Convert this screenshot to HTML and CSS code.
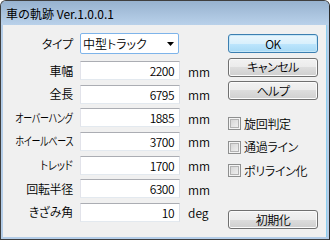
FILE: index.html
```html
<!DOCTYPE html>
<html lang="ja">
<head>
<meta charset="utf-8">
<title>車の軌跡</title>
<link rel="stylesheet" href="styles.css">
</head>
<body>
<div class="window">
  <div class="titlebar"><span class="title">車の軌跡 Ver.1.0.0.1</span></div>
  <div class="client">
    <div class="form">
      <div class="row-type">
        <span class="label">タイプ</span>
        <div class="combo">
          <span class="combo-text">中型トラック</span>
          <svg class="combo-arrow" width="7" height="4" viewBox="0 0 7 4"><polygon points="0,0 7,0 3.5,4" fill="#000"/></svg>
        </div>
      </div>
      <div class="fields">
        <span class="label">車幅</span><span class="field">2200</span><span class="unit">mm</span>
        <span class="label">全長</span><span class="field">6795</span><span class="unit">mm</span>
        <span class="label label-narrow">オーバーハング</span><span class="field">1885</span><span class="unit">mm</span>
        <span class="label label-narrow">ホイールベース</span><span class="field">3700</span><span class="unit">mm</span>
        <span class="label label-tight">トレッド</span><span class="field">1700</span><span class="unit">mm</span>
        <span class="label">回転半径</span><span class="field">6300</span><span class="unit">mm</span>
        <span class="label">きざみ角</span><span class="field">10</span><span class="unit">deg</span>
      </div>
    </div>
    <div class="side">
      <div class="btn btn-default">OK</div>
      <div class="btn">キャンセル</div>
      <div class="btn">ヘルプ</div>
      <div class="checks">
        <div class="check"><span class="box"></span><span>旋回判定</span></div>
        <div class="check"><span class="box"></span><span>通過ライン</span></div>
        <div class="check"><span class="box"></span><span>ポリライン化</span></div>
      </div>
      <div class="btn btn-init">初期化</div>
    </div>
  </div>
</div>
</body>
</html>
```

FILE: styles.css
```css
* { box-sizing: border-box; }
html, body { margin: 0; background: #fff; }
body {
  width: 330px;
  height: 240px;
  overflow: hidden;
  font-family: "Noto Sans CJK JP", "Liberation Sans", sans-serif;
  font-size: 12px;
  font-weight: 350;
  color: #000;
  font-feature-settings: "palt";
}
.window {
  width: 330px;
  height: 240px;
  border: 1px solid #3f3f3f;
  border-right-color: #2b2b2b;
  border-radius: 6px 6px 0 0;
  background: #b4cde8;
  display: flex;
  flex-direction: column;
}
.titlebar {
  height: 24px;
  background: linear-gradient(#97b2cf, #b9d1ea);
  border-radius: 5px 5px 0 0;
  display: flex;
  align-items: center;
  padding-left: 5px;
}
.title {
  font-size: 12px;
  font-weight: 400;
  line-height: 14px;
  padding-top: 1px;
  font-feature-settings: normal;
}
.client {
  flex: 1;
  margin: 0 2px 2px;
  background: #f0f0f0;
  display: flex;
  padding: 8px 0 8px 0;
  border-right: 1px solid #8fd0ef;
}
.form { width: 225px; }
.row-type {
  display: grid;
  grid-template-columns: 70px 100px;
  column-gap: 7px;
  height: 21px;
  align-items: center;
}
.label {
  justify-self: end;
  white-space: nowrap;
  line-height: 14px;
  letter-spacing: -0.3px;
}
.label-narrow {
  transform: scaleX(0.75);
  transform-origin: right center;
}
.label-tight {
  transform: scaleX(0.86);
  transform-origin: right center;
}
.combo {
  height: 21px;
  width: 99px;
  border: 1px solid #7eb4ea;
  border-radius: 2px;
  background: #fff;
  display: flex;
  align-items: center;
  justify-content: space-between;
  padding: 0 4px 0 2px;
}
.combo-text { line-height: 14px; }
.combo-arrow { display: block; }
.fields {
  display: grid;
  grid-template-columns: 70px 100px auto;
  column-gap: 7px;
  grid-auto-rows: 19px;
  row-gap: 4.67px;
  margin-top: 7px;
  align-items: center;
}
.field {
  height: 19px;
  background: #fff;
  border: 1px solid;
  border-color: #abadb3 #dbdfe6 #e3e9ef #e2e3ea;
  text-align: right;
  padding-right: 5px;
  line-height: 17px;
  letter-spacing: -0.5px;
}
.unit {
  margin-left: 1px;
  line-height: 14px;
  padding-top: 2px;
}
.side {
  width: 90px;
  display: flex;
  flex-direction: column;
  padding-top: 1px;
}
.btn {
  height: 19px;
  margin-bottom: 4.5px;
  border: 1px solid #707070;
  border-radius: 3px;
  background: linear-gradient(#f2f2f2 0%, #ebebeb 50%, #dddddd 50%, #cfcfcf 100%);
  box-shadow: inset 0 0 0 1px #fbfbfb;
  display: flex;
  align-items: center;
  justify-content: center;
  line-height: 14px;
  letter-spacing: -0.5px;
}
.btn-default {
  border-color: #3c7fb1;
  background: linear-gradient(#eaf6fd 0%, #d9f0fc 50%, #bee6fd 50%, #a7d9f5 100%);
  box-shadow: inset 0 0 0 1px #c6e7f8;
}
.checks {
  margin-top: 9px;
  display: flex;
  flex-direction: column;
  gap: 3.67px;
}
.check {
  height: 20px;
  display: flex;
  align-items: center;
  gap: 3px;
  line-height: 14px;
  letter-spacing: -0.3px;
}
.box {
  width: 13px;
  height: 13px;
  border: 1px solid #8e8f8f;
  background: linear-gradient(135deg, #cfcfcf, #f6f6f6);
  box-shadow: inset 0 0 0 1px #f4f4f4, inset 0 0 0 2px #b3b3b3;
  flex: none;
}
.btn-init {
  margin-top: auto;
  margin-bottom: 0;
}
```
